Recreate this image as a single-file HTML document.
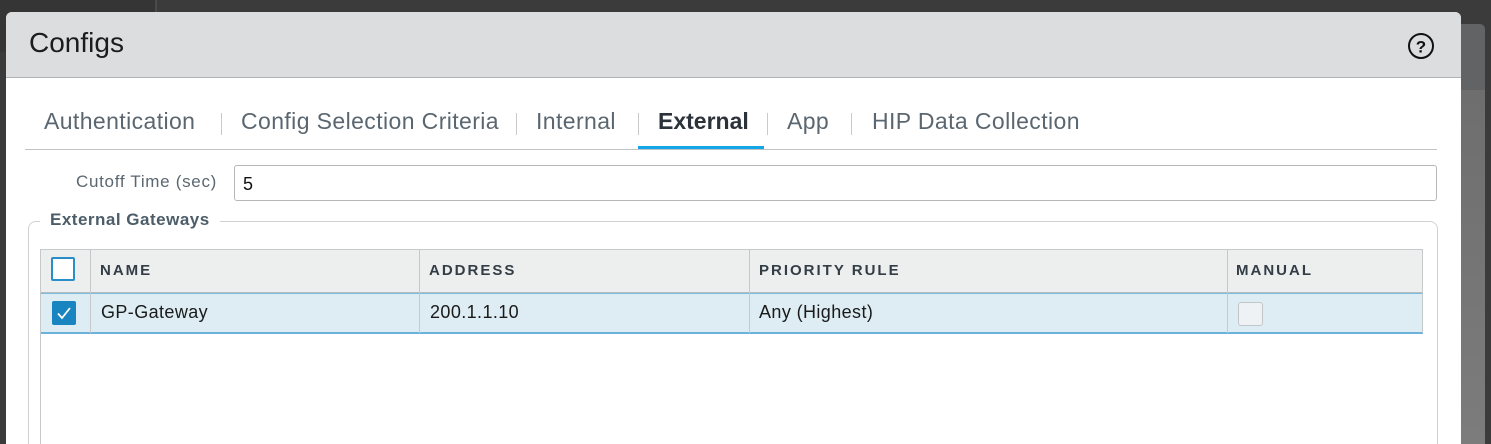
<!DOCTYPE html>
<html><head><style>
*{box-sizing:border-box;margin:0;padding:0}
html,body{width:1491px;height:444px;overflow:hidden}
body{background:#3b3b3b;font-family:"Liberation Sans",sans-serif;position:relative}
.a{position:absolute}
.tab{position:absolute;top:108px;font-size:23px;color:#5b6770;white-space:nowrap;letter-spacing:0.4px}
.sep{position:absolute;top:113px;width:1px;height:22px;background:#c8cbce}
.th{position:absolute;top:262px;font-size:15px;font-weight:bold;letter-spacing:2px;color:#333d46}
.td{position:absolute;top:302px;font-size:18px;color:#1a1a1a;letter-spacing:0.4px}
.vl{position:absolute;width:1px;background:#c6c9cb}
</style></head><body>
<div class="a" style="left:0;top:0;width:155px;height:52px;background:#353535"></div>
<div class="a" style="left:155px;top:0;width:2px;height:12px;background:#4a4a4a"></div>
<div class="a" style="left:1461px;top:24px;width:24px;height:66px;background:#626365;border-radius:0 5px 0 0"></div>
<div class="a" style="left:1461px;top:90px;width:24px;height:354px;background:linear-gradient(#6e6e6e,#7c7c7c)"></div>
<div class="a" style="left:6px;top:12px;width:1455px;height:432px;background:#fff;border-radius:6px 6px 0 0;overflow:hidden">
  <div class="a" style="left:0;top:0;width:1455px;height:66px;background:#dcdddf;border-bottom:1px solid #b0b2b4"></div>
  <div class="a" style="left:23px;top:15px;font-size:28px;color:#1c1c1c">Configs</div>
  <svg class="a" style="left:1401px;top:20px" width="28" height="28" viewBox="0 0 28 28"><circle cx="14" cy="14" r="12" fill="none" stroke="#111" stroke-width="2"/><text x="14" y="20.5" text-anchor="middle" font-family="Liberation Sans" font-weight="bold" font-size="17" fill="#111">?</text></svg>
</div>
<div class="tab" style="left:44px">Authentication</div>
<div class="sep" style="left:221px"></div>
<div class="tab" style="left:241px">Config Selection Criteria</div>
<div class="sep" style="left:516px"></div>
<div class="tab" style="left:536px">Internal</div>
<div class="sep" style="left:638px"></div>
<div class="tab" style="left:658px;font-weight:bold;color:#2b323a;letter-spacing:0">External</div>
<div class="sep" style="left:767px"></div>
<div class="tab" style="left:787px">App</div>
<div class="sep" style="left:851px"></div>
<div class="tab" style="left:872px">HIP Data Collection</div>
<div class="a" style="left:25px;top:149px;width:1412px;height:1px;background:#c0c2c4"></div>
<div class="a" style="left:638px;top:146px;width:126px;height:3px;background:#13a6e8"></div>
<div class="a" style="left:76px;top:172px;font-size:17px;color:#5b6770;letter-spacing:0.7px">Cutoff Time (sec)</div>
<div class="a" style="left:234px;top:165px;width:1203px;height:36px;border:1px solid #b5b8bb;border-radius:3px;font-size:18px;color:#111;padding:8px 0 0 8px">5</div>
<div class="a" style="left:28px;top:221px;width:1410px;height:240px;border:1px solid #cfd2d4;border-radius:8px"></div>
<div class="a" style="left:40px;top:210px;padding:0 10px;background:#fff;font-size:17px;font-weight:bold;color:#4c5d69;letter-spacing:0.5px">External Gateways</div>
<div class="a" style="left:40px;top:249px;width:1383px;height:44px;background:#edeeee;border:1px solid #c6c9cb;border-bottom:1px solid #b8bcbf"></div>
<div class="a" style="left:40px;top:293px;width:1383px;height:41px;background:#deedf4;border-top:1px solid #7bbde0;border-bottom:2px solid #6cb3dc"></div>
<div class="vl" style="left:40px;top:249px;height:195px"></div>
<div class="vl" style="left:90px;top:249px;height:84px"></div>
<div class="vl" style="left:419px;top:249px;height:84px"></div>
<div class="vl" style="left:749px;top:249px;height:84px"></div>
<div class="vl" style="left:1227px;top:249px;height:84px"></div>
<div class="vl" style="left:1422px;top:249px;height:84px"></div>
<div class="a" style="left:51px;top:257px;width:24px;height:24px;border:2px solid #2a8fc8;border-radius:2px;background:#fff"></div>
<div class="th" style="left:100px">NAME</div>
<div class="th" style="left:429px">ADDRESS</div>
<div class="th" style="left:759px">PRIORITY RULE</div>
<div class="th" style="left:1236px">MANUAL</div>
<svg class="a" style="left:52px;top:301px" width="24" height="24" viewBox="0 0 24 24"><rect width="24" height="24" rx="2" fill="#1985c0"/><path d="M6 12.5 L10 17 L18 7" fill="none" stroke="#fff" stroke-width="1.8"/></svg>
<div class="td" style="left:101px">GP-Gateway</div>
<div class="td" style="left:430px">200.1.1.10</div>
<div class="td" style="left:759px">Any (Highest)</div>
<div class="a" style="left:1238px;top:302px;width:25px;height:24px;border:1px solid #c2c6c9;border-radius:3px;background:#eef2f4"></div>
</body></html>
